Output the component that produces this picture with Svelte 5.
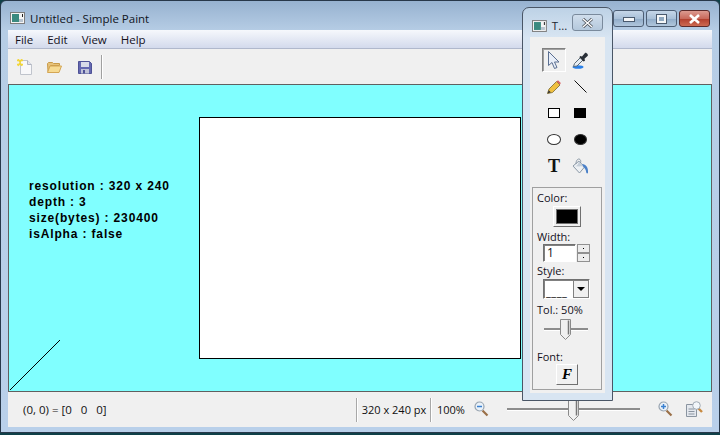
<script>
  const menus = ['File', 'Edit', 'View', 'Help'];
  const info = ['resolution : 320 x 240', 'depth : 3', 'size(bytes) : 230400', 'isAlpha : false'];
</script>

<div class="desktop">
  <div class="window">
    <div class="titlebar">
      <svg class="appicon" width="15" height="12" viewBox="0 0 15 12">
        <rect x="0.5" y="0.5" width="14" height="11" fill="#f4f4f4" stroke="#7c7c7c" />
        <rect x="2" y="2" width="7" height="8" fill="#3a8a80" />
        <rect x="9" y="7" width="4" height="3" fill="#b8c4d0" />
        <rect x="12" y="2" width="1" height="3" fill="#222" />
      </svg>
      <span class="title">Untitled - Simple Paint</span>
      <div class="caption">
        <button class="cap" aria-label="min"><i class="min"></i></button>
        <button class="cap" aria-label="max"><i class="max"></i></button>
        <button class="cap close" aria-label="close">
          <svg width="13" height="10" viewBox="0 0 13 10"><path d="M2 1l9 8M11 1l-9 8" stroke="#fff" stroke-width="2.6" /></svg>
        </button>
      </div>
    </div>

    <div class="client">
      <div class="menubar">
        {#each menus as m}
          <span>{m}</span>
        {/each}
      </div>

      <div class="toolbar">
        <svg class="tnew" width="15" height="16" viewBox="0 0 15 16">
          <path d="M3.500 1.500h7l4 4v10h-11z" fill="#f8f8fa" stroke="#c0c4cc" />
          <path d="M10.500 1.500v4h4" fill="#e4e6f0" stroke="#b0b4c0" />
          <path d="M0 1.500h6M0 5.500h6M1 0l4 7M5 0l-4 7" stroke="#f2d63c" stroke-width="1.300" />
        </svg>
        <svg class="topen" width="15" height="11" viewBox="0 0 15 11">
          <path d="M.5 1.500l1-1h4l1 1h6v2h-9l-2.500 6z" fill="#e6c27a" stroke="#c89a48" />
          <path d="M3 4h11.500l-2.500 6.500h-11.500z" fill="#f6da92" stroke="#d4a654" />
        </svg>
        <svg class="tsave" width="14" height="13" viewBox="0 0 14 13">
          <path d="M.5 .5h11l2 2v10h-13z" fill="#6468b0" stroke="#4e5296" />
          <rect x="3" y="1" width="8" height="5" fill="#d8dbe8" />
          <rect x="3" y="8" width="8" height="4.500" fill="#c0c3d8" />
          <rect x="5" y="9" width="2" height="3.500" fill="#4e5296" />
        </svg>
        <i class="tsep"></i>
      </div>

      <div class="canvas">
        <div class="paper"></div>
        <div class="info">
          {#each info as line}
            <div>{line}</div>
          {/each}
        </div>
        <svg class="stroke" width="52" height="52" viewBox="0 0 52 52">
          <path d="M.5 51.500L51 1" stroke="#000" fill="none" shape-rendering="crispEdges" />
        </svg>
      </div>

      <div class="statusbar">
        <span class="pixel">(0, 0) = [0&nbsp;&nbsp;&nbsp;0&nbsp;&nbsp;&nbsp;0]</span>
        <i class="ssep"></i>
        <span class="dims">320 x 240 px</span>
        <i class="ssep"></i>
        <span class="zoom">100%</span>
        <svg class="mag" width="15" height="16" viewBox="0 0 15 16">
          <path d="M8.500 9.500l5 5" stroke="#9a7048" stroke-width="2.200" />
          <circle cx="5.500" cy="5.500" r="4.500" fill="#eaf2fa" stroke="#98a4b0" stroke-width="1.200" />
          <path d="M3 5.500h5" stroke="#3a80d0" stroke-width="1.500" />
        </svg>
        <div class="hslider">
          <i class="track"></i>
          <svg class="thumb" width="11" height="22" viewBox="0 0 11 22">
            <path d="M.5 .5h10v16l-5 5-5-5z" fill="#f0f0f0" stroke="#8a8a8a" />
            <path d="M8.500 1.500v15" stroke="#777" stroke-width="1.500" />
          </svg>
        </div>
        <svg class="mag plus" width="15" height="16" viewBox="0 0 15 16">
          <path d="M8.500 9.500l5 5" stroke="#9a7048" stroke-width="2.200" />
          <circle cx="5.500" cy="5.500" r="4.500" fill="#eaf2fa" stroke="#98a4b0" stroke-width="1.200" />
          <path d="M3 5.500h5M5.500 3v5" stroke="#3a80d0" stroke-width="1.500" />
        </svg>
        <svg class="fit" width="17" height="16" viewBox="0 0 17 16">
          <path d="M.5 3.500h7l3 3v9h-10z" fill="#e4e8ee" stroke="#8a94a0" />
          <path d="M2.500 8h6M2.500 10.500h6M2.500 13h6" stroke="#8a94a0" />
          <path d="M12 7l4 4" stroke="#c88a40" stroke-width="2.400" />
          <circle cx="10.500" cy="4.500" r="3.800" fill="#f2f6fa" stroke="#a0aab4" />
        </svg>
      </div>
    </div>
  </div>

  <div class="palette">
    <div class="ptitle">
      <svg width="15" height="12" viewBox="0 0 15 12">
        <rect x="0.5" y="0.5" width="14" height="11" fill="#f4f4f4" stroke="#7c7c7c" />
        <rect x="2" y="2" width="7" height="8" fill="#3a8a80" />
        <rect x="9" y="7" width="4" height="3" fill="#b8c4d0" />
        <rect x="12" y="2" width="1" height="3" fill="#222" />
      </svg>
      <span>T...</span>
      <button class="pclose" aria-label="close">
        <svg width="13" height="10" viewBox="0 0 13 10"><path d="M2 1l9 8M11 1l-9 8" stroke="#4a5058" stroke-width="3" /><path d="M2 1l9 8M11 1l-9 8" stroke="#fff" stroke-width="1.400" /></svg>
      </button>
    </div>

    <div class="pbody">
      <div class="tools">
        <div class="tool active">
          <svg width="14" height="20" viewBox="0 0 14 20"><path d="M1.500 1.500v14l3.500-3 2.500 6 2.500-1-2.500-5.500h4.500z" fill="#e8eef8" stroke="#5a6e90" /></svg>
        </div>
        <div class="tool">
          <svg width="17" height="17" viewBox="0 0 17 17">
            <ellipse cx="6" cy="15" rx="5.500" ry="1.800" fill="#2a80e8" />
            <path d="M1.500 14.500l1-3 6.500-6.500 2.500 2.500-6.500 6.500z" fill="#e6ecf2" stroke="#5a6a76" />
            <path d="M8 4l2 .5 3-3.500c1-.8 3.500 1.500 2.800 2.800l-3.300 3 .5 2-1.500.7-4-4z" fill="#2a3038" />
          </svg>
        </div>
        <div class="tool">
          <svg width="14" height="14" viewBox="0 0 14 14">
            <path d="M.5 13.500l1.500-4.500 7.500-7.500 3.500 3.500-7.500 7.500z" fill="#f0c040" stroke="#7a6a30" stroke-width=".8" />
            <path d="M9.500 1.500l3.500 3 .8-1.500-2.800-2.800z" fill="#d86060" />
            <path d="M.5 13.500l1.300-3.300 2 2z" fill="#333" />
          </svg>
        </div>
        <div class="tool">
          <svg width="13" height="13" viewBox="0 0 13 13"><path d="M.5 .5L12.500 12.500" stroke="#111" /></svg>
        </div>
        <div class="tool"><i class="rect"></i></div>
        <div class="tool"><i class="rect fill"></i></div>
        <div class="tool"><i class="oval"></i></div>
        <div class="tool"><i class="oval fill"></i></div>
        <div class="tool"><span class="ttool">T</span></div>
        <div class="tool">
          <svg width="17" height="17" viewBox="0 0 17 17">
            <path d="M1 8l6-5 5.500 6-5 6z" fill="#eef1f4" stroke="#8a98a6" />
            <path d="M1 8c2 1 5 0 6-5l5.500 6c-2-1-3.500-1-5-.5z" fill="#c4ced8" />
            <path d="M4 6c0-7 6-6 4.500-1" fill="none" stroke="#8a98a6" />
            <path d="M10 6c4 0 6.500 3.500 6 9-1 1-2 0-2-2-.5-2-1.500-3-2.500-4z" fill="#4a80c8" />
          </svg>
        </div>
      </div>

      <div class="group">
        <span class="lbl">Color:</span>
        <button class="swatch" aria-label="color"><i></i></button>
        <span class="lbl">Width:</span>
        <div class="spin">
          <span class="spinval">1</span>
          <div class="arrows"><i></i><i></i></div>
        </div>
        <span class="lbl">Style:</span>
        <div class="combo">
          <span class="dash">____</span>
          <span class="drop"></span>
        </div>
        <span class="lbl tollbl">Tol.: 50%</span>
        <div class="tol">
          <i class="track"></i>
          <svg class="thumb" width="11" height="22" viewBox="0 0 11 22">
            <path d="M.5 .5h10v15l-5 5-5-5z" fill="#f0f0f0" stroke="#8a8a8a" />
            <path d="M8.500 1.500v14" stroke="#777" stroke-width="1.500" />
          </svg>
        </div>
        <span class="lbl font">Font:</span>
        <button class="fontbtn">F</button>
      </div>
    </div>
  </div>
</div>

<style>
  :global(body) {
    margin: 0;
    background: #0f4048;
  }

  .desktop {
    position: relative;
    width: 720px;
    height: 435px;
    overflow: hidden;
    font-family: "Open Sans", "Noto Sans", sans-serif;
    font-size: 11.5px;
    color: #111;
  }

  .window {
    box-sizing: border-box;
    width: 720px;
    height: 433px;
    border: 1px solid #28384a;
    border-radius: 6px 6px 0 0;
    background: linear-gradient(#97b2d0 0, #b6cde5 30px, #b9d0ea 100%);
    display: flex;
    flex-direction: column;
    padding: 0 7px 5px;
  }

  .titlebar {
    height: 29px;
    box-sizing: border-box;
    padding: 5px 0 0 2px;
    flex: none;
    display: flex;
    align-items: center;
    gap: 5px;
  }
  .title {
    color: #10141c;
  }
  .caption {
    margin-left: auto;
    align-self: flex-start;
    display: flex;
    gap: 2px;
    margin-top: 4px;
    margin-right: 2px;
  }
  .cap {
    width: 31px;
    height: 17px;
    box-sizing: border-box;
    padding: 0;
    border: 1px solid #4d5e74;
    border-radius: 3px;
    background: linear-gradient(#c5d6e8 0, #a9c0d8 50%, #8fabc8 51%, #b0c6dc 100%);
    display: flex;
    align-items: center;
    justify-content: center;
  }
  .cap.close {
    border-color: #5c2a2a;
    background: linear-gradient(#dc9a90 0, #c96a5c 50%, #b13d2c 51%, #cc6a52 100%);
  }
  .min {
    width: 10px;
    height: 3px;
    background: #f4f6f8;
    border: 1px solid #4a5a6e;
    margin-top: 2px;
  }
  .max {
    box-sizing: border-box;
    width: 9px;
    height: 8px;
    border: 2px solid #f4f6f8;
    outline: 1px solid #4a5a6e;
    background: #8fa8c0;
  }

  .client {
    flex: 1;
    min-height: 0;
    display: flex;
    flex-direction: column;
    background: #f0f0f0;
  }

  .menubar {
    height: 19px;
    box-sizing: border-box;
    flex: none;
    display: flex;
    align-items: center;
    gap: 14px;
    padding-left: 7px;
    background: linear-gradient(#f6f8fc, #d3daec);
    border-bottom: 1px solid #b0b8cc;
    color: #14101c;
  }

  .toolbar {
    height: 35px;
    flex: none;
    display: flex;
    align-items: center;
    padding-left: 9px;
  }
  .topen {
    margin-left: 15px;
    margin-top: 2px;
  }
  .tsave {
    margin-left: 16px;
    margin-top: 1px;
  }
  .tnew {
    margin-top: 1px;
  }
  .tsep {
    width: 1px;
    height: 24px;
    background: #a0a0a0;
    border-right: 1px solid #fff;
    margin-left: 9px;
  }

  .canvas {
    position: relative;
    flex: 1;
    min-height: 0;
    display: flex;
    align-items: center;
    justify-content: center;
    background: #80ffff;
    border: 1px solid #606060;
  }
  .paper {
    box-sizing: border-box;
    width: 322px;
    height: 242px;
    background: #fff;
    border: 1px solid #000;
  }
  .info {
    position: absolute;
    left: 20px;
    top: 93px;
    font-family: "Liberation Sans", Arial, sans-serif;
    font-weight: 700;
    font-size: 12px;
    line-height: 16px;
    letter-spacing: 0.85px;
    color: #000;
  }
  .stroke {
    position: absolute;
    left: 0;
    bottom: 0;
  }

  .statusbar {
    height: 35px;
    flex: none;
    display: flex;
    align-items: center;
    background: #f0f0f0;
    font-size: 11px;
  }
  .pixel {
    width: 348px;
    padding-left: 15px;
    box-sizing: border-box;
    font-size: 11.5px;
  }
  .ssep {
    width: 1px;
    height: 24px;
    background: #a8a8a8;
    border-right: 1px solid #fff;
  }
  .dims {
    width: 72px;
    text-align: center;
  }
  .zoom {
    margin-left: 5px;
    width: 37px;
  }
  .mag {
    margin-top: -2px;
  }
  .hslider {
    position: relative;
    width: 133px;
    height: 24px;
    margin-left: 18px;
  }
  .track {
    position: absolute;
    left: 0;
    right: 0;
    top: 10px;
    height: 2px;
    background: #8c8c8c;
    border-bottom: 1px solid #fff;
  }
  .hslider .thumb {
    position: absolute;
    left: 61px;
    top: 1px;
  }
  .mag.plus {
    margin-left: 18px;
  }
  .fit {
    margin-left: 13px;
    margin-top: -2px;
  }

  .palette {
    position: absolute;
    left: 522px;
    top: 7px;
    width: 91px;
    height: 394px;
    box-sizing: border-box;
    border: 1px solid #4a5666;
    border-radius: 7px 7px 0 0;
    background: linear-gradient(#bdd2e6 0, #d8e5f2 30px, #d8e5f2 100%);
    padding: 0 7px 7px;
    display: flex;
    flex-direction: column;
  }
  .ptitle {
    height: 29px;
    box-sizing: border-box;
    padding: 6px 0 0 2px;
    flex: none;
    display: flex;
    align-items: center;
    gap: 5px;
    color: #1c2430;
  }
  .pclose {
    width: 31px;
    height: 17px;
    box-sizing: border-box;
    padding: 0;
    border: 1px solid #7a8a9c;
    border-radius: 3px;
    background: linear-gradient(#d0deec, #b4c8dc);
    display: flex;
    align-items: center;
    justify-content: center;
    margin: -6px 2px 0 auto;
  }

  .pbody {
    flex: 1;
    min-height: 0;
    background: #f0f0f0;
    display: flex;
    flex-direction: column;
    padding: 11px 3px 3px 2px;
  }
  .tools {
    display: grid;
    grid-template-columns: 26px 26px;
    grid-auto-rows: 26.5px;
    justify-content: center;
    height: 139px;
    flex: none;
  }
  .tool {
    box-sizing: border-box;
    width: 24px;
    height: 24px;
    display: flex;
    align-items: center;
    justify-content: center;
    justify-self: center;
  }
  .tool.active {
    border: 1px solid;
    border-color: #808080 #fff #fff #808080;
    box-shadow: inset 1px 1px 0 #a0a0a0;
  }
  .rect {
    box-sizing: border-box;
    width: 12px;
    height: 10px;
    border: 1px solid #000;
    background: #fff;
  }
  .rect.fill {
    background: #000;
  }
  .oval {
    box-sizing: border-box;
    width: 14px;
    height: 11px;
    border: 1.5px solid #333;
    border-radius: 50%;
    background: #fff;
  }
  .oval.fill {
    background: #000;
    width: 13px;
  }
  .ttool {
    font-family: "Liberation Serif", serif;
    font-weight: 700;
    font-size: 18px;
    line-height: 1;
    color: #111;
  }

  .group {
    flex: 1;
    box-sizing: border-box;
    border: 1px solid #a0a0a0;
    padding: 2px 4px 0;
    display: flex;
    flex-direction: column;
    align-items: flex-start;
    font-size: 11px;
    line-height: 15px;
    color: #14101c;
  }
  .swatch {
    align-self: center;
    box-sizing: border-box;
    width: 28px;
    height: 21px;
    padding: 2px;
    margin: 1px 0 2px;
    background: #f0f0f0;
    border: 1px solid;
    border-color: #fff #707070 #707070 #fff;
    display: flex;
  }
  .swatch i {
    flex: 1;
    background: #000;
    border: 1px solid #707070;
  }
  .spin {
    display: flex;
    height: 18px;
    margin: 0 0 1px 6px;
  }
  .spinval {
    box-sizing: border-box;
    width: 33px;
    height: 18px;
    background: #fff;
    border: 1px solid;
    border-color: #707070 #fff #fff #707070;
    box-shadow: inset 1px 1px 0 #808080;
    padding-left: 3px;
    line-height: 16px;
    font-size: 12px;
  }
  .arrows {
    display: flex;
    flex-direction: column;
    width: 13px;
    margin-left: 1px;
  }
  .arrows i {
    box-sizing: border-box;
    height: 9px;
    background: #ececec;
    border: 1px solid #909090;
    position: relative;
  }
  .arrows i::after {
    content: "";
    position: absolute;
    left: 5px;
    top: 3px;
    width: 1px;
    height: 1px;
    background: #000;
  }
  .combo {
    box-sizing: border-box;
    width: 47px;
    height: 20px;
    display: flex;
    margin: 1px 0 2px 6px;
    background: #fff;
    border: 1px solid;
    border-color: #707070 #fff #fff #707070;
    box-shadow: inset 1px 1px 0 #808080;
  }
  .dash {
    flex: 1;
    padding-left: 2px;
    font-size: 11px;
    line-height: 23px;
    height: 18px;
    overflow: hidden;
    letter-spacing: 0.5px;
    color: #000;
  }
  .drop {
    box-sizing: border-box;
    width: 16px;
    background: #f0f0f0;
    border: 1px solid #808080;
    position: relative;
  }
  .drop::after {
    content: "";
    position: absolute;
    left: 3px;
    top: 6px;
    border: 4px solid transparent;
    border-top: 4px solid #000;
    border-bottom: 0;
  }
  .tollbl {
    margin-top: 1px;
  }
  .tol {
    position: relative;
    width: 44px;
    height: 26px;
    margin: 2px 0 0 7px;
  }
  .tol .track {
    top: 9px;
  }
  .tol .thumb {
    position: absolute;
    left: 16px;
    top: 0;
  }
  .lbl.font {
    margin-top: 4px;
  }
  .fontbtn {
    align-self: center;
    box-sizing: border-box;
    width: 22px;
    height: 21px;
    padding: 0;
    background: #f0f0f0;
    border: 1px solid;
    border-color: #fff #707070 #707070 #fff;
    font-family: "Liberation Serif", serif;
    font-weight: 700;
    font-style: italic;
    font-size: 15px;
    line-height: 1;
    color: #000;
  }
</style>
